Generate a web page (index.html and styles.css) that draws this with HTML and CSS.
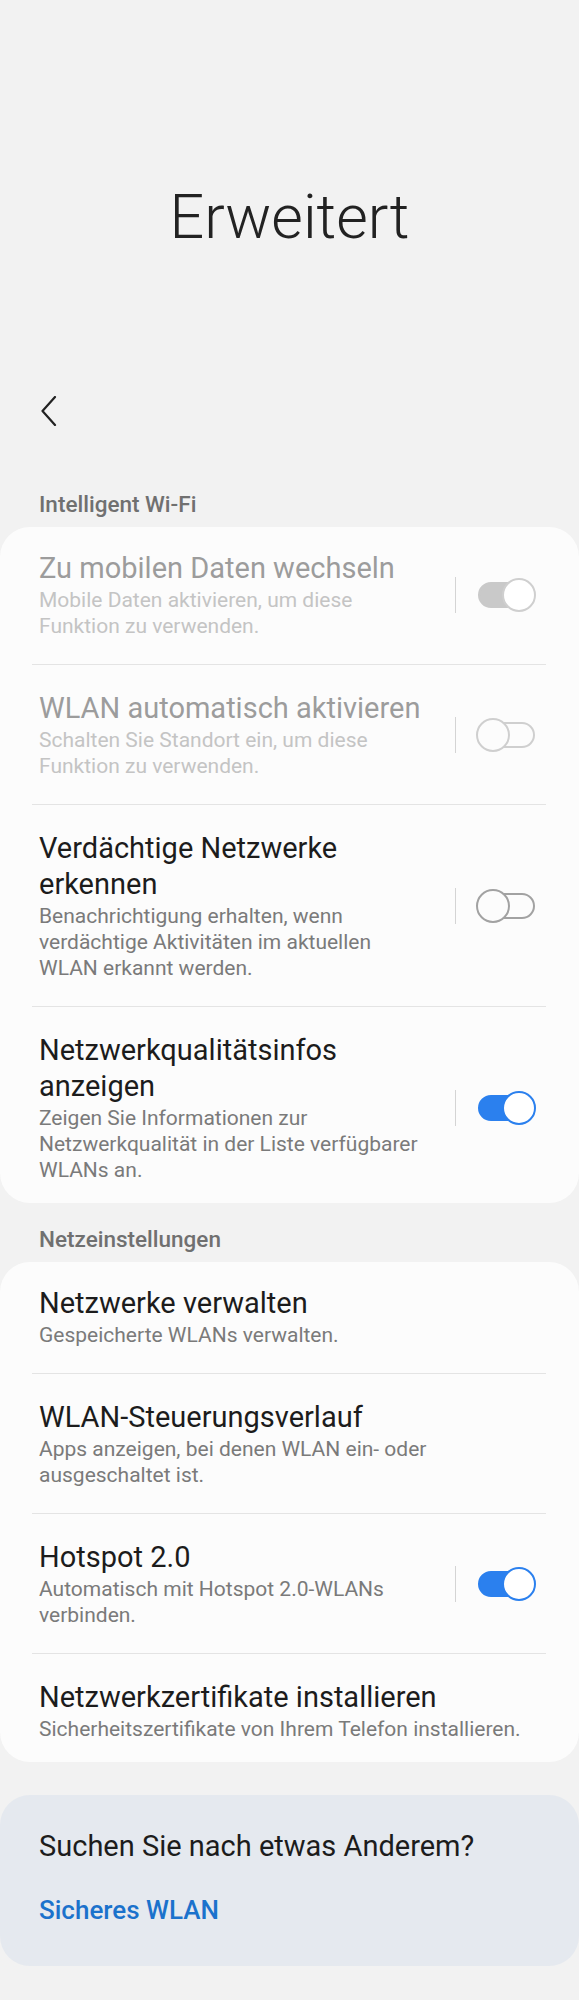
FILE: index.html
```html
<!DOCTYPE HTML>
<html lang="de">
<head>
  <meta charset="UTF-8">
  <meta name="viewport" content="width=device-width, initial-scale=1.0">
  <title>Erweitert</title>
  <link rel="stylesheet" href="styles.css">
</head>
<body>
  <div class="page">
    <!-- Big collapsing title -->
    <h1 class="page-title">Erweitert</h1>
    <div class="nav">
      <svg class="back" width="18" height="30" viewBox="0 0 18 30">
        <polyline points="15,1 2.5,15 15,29" fill="none" stroke="#222" stroke-width="2.2" stroke-linecap="round" stroke-linejoin="round"/>
      </svg>
    </div>

    <!-- Intelligent Wi-Fi -->
    <div class="section-label">Intelligent Wi-Fi</div>
    <div class="card">
      <div class="row disabled">
        <div class="row-text with-ctl">
          <div class="row-title">Zu mobilen Daten wechseln</div>
          <div class="row-sub">Mobile Daten aktivieren, um diese Funktion zu verwenden.</div>
        </div>
        <div class="row-ctl">
          <span class="divider"></span>
          <span class="switch on"><span class="track"></span><span class="knob"></span></span>
        </div>
      </div>
      <div class="row disabled">
        <div class="row-text with-ctl">
          <div class="row-title">WLAN automatisch aktivieren</div>
          <div class="row-sub">Schalten Sie Standort ein, um diese Funktion zu verwenden.</div>
        </div>
        <div class="row-ctl">
          <span class="divider"></span>
          <span class="switch"><span class="track"></span><span class="knob"></span></span>
        </div>
      </div>
      <div class="row">
        <div class="row-text with-ctl">
          <div class="row-title">Verdächtige Netzwerke erkennen</div>
          <div class="row-sub">Benachrichtigung erhalten, wenn verdächtige Aktivitäten im aktuellen WLAN erkannt werden.</div>
        </div>
        <div class="row-ctl">
          <span class="divider"></span>
          <span class="switch"><span class="track"></span><span class="knob"></span></span>
        </div>
      </div>
      <div class="row">
        <div class="row-text with-ctl">
          <div class="row-title">Netzwerkqualitätsinfos anzeigen</div>
          <div class="row-sub">Zeigen Sie Informationen zur Netzwerkqualität in der Liste verfügbarer WLANs an.</div>
        </div>
        <div class="row-ctl">
          <span class="divider"></span>
          <span class="switch on"><span class="track"></span><span class="knob"></span></span>
        </div>
      </div>
    </div>

    <!-- Netzeinstellungen -->
    <div class="section-label">Netzeinstellungen</div>
    <div class="card">
      <div class="row">
        <div class="row-text">
          <div class="row-title">Netzwerke verwalten</div>
          <div class="row-sub">Gespeicherte WLANs verwalten.</div>
        </div>
      </div>
      <div class="row">
        <div class="row-text">
          <div class="row-title">WLAN-Steuerungsverlauf</div>
          <div class="row-sub">Apps anzeigen, bei denen WLAN ein- oder ausgeschaltet ist.</div>
        </div>
      </div>
      <div class="row">
        <div class="row-text with-ctl">
          <div class="row-title">Hotspot 2.0</div>
          <div class="row-sub">Automatisch mit Hotspot 2.0-WLANs verbinden.</div>
        </div>
        <div class="row-ctl">
          <span class="divider"></span>
          <span class="switch on"><span class="track"></span><span class="knob"></span></span>
        </div>
      </div>
      <div class="row">
        <div class="row-text">
          <div class="row-title">Netzwerkzertifikate installieren</div>
          <div class="row-sub">Sicherheitszertifikate von Ihrem Telefon installieren.</div>
        </div>
      </div>
    </div>

    <!-- Suggestions -->
    <div class="card suggest">
      <div class="suggest-title">Suchen Sie nach etwas Anderem?</div>
      <a class="suggest-link" href="#">Sicheres WLAN</a>
    </div>
  </div>
</body>
</html>
```

FILE: styles.css
```css
body {
  margin: 0;
  background-color: #f2f2f2;
  font-family: 'Roboto', 'Liberation Sans', sans-serif;
  color: #1c1c1c;
}
.page {
  width: 579px;
  padding-bottom: 35px;
}
.page-title {
  margin: 0;
  padding-top: 179px;
  font-size: 61px;
  line-height: 77px;
  font-weight: 300;
  text-align: center;
  color: #222;
}
.nav {
  display: flex;
  align-items: center;
  height: 56px;
  margin-top: 127px;
  margin-bottom: 29px;
  padding-left: 40px;
}
.section-label {
  padding: 23px 39px 10px;
  font-size: 22.5px;
  line-height: 26px;
  font-weight: 500;
  color: #707070;
}
.card {
  background-color: #fcfcfc;
  border-radius: 30px;
  overflow: hidden;
}
.row {
  display: flex;
  align-items: center;
  margin: 0 33px 0 32px;
  padding: 25px 10px 25px 7px;
  border-bottom: 1px solid #e4e4e4;
}
.row:first-child {
  padding-top: 23px;
}
.row:last-child {
  padding-bottom: 20px;
  border-bottom: none;
}
.row-text {
  flex: 1;
}
.row-text.with-ctl {
  padding-right: 24px;
}
.row-title {
  font-size: 29px;
  line-height: 36px;
  color: #1c1c1c;
}
.row-sub {
  margin-top: 1px;
  font-size: 21px;
  line-height: 26px;
  color: #7a7a7a;
}
.row.disabled .row-title {
  color: #9c9c9c;
}
.row.disabled .row-sub {
  color: #c4c4c4;
}
.row-ctl {
  display: flex;
  align-items: center;
}
.divider {
  width: 1px;
  height: 36px;
  background-color: #d4d4d4;
  margin-right: 20px;
}

/* One UI style switch */
.switch {
  position: relative;
  display: block;
  width: 60px;
  height: 34px;
}
.switch .track {
  position: absolute;
  left: 2px;
  right: 1px;
  top: 4px;
  height: 26px;
  border: 2px solid #a2a2a2;
  border-radius: 13px;
  box-sizing: border-box;
}
.switch .knob {
  position: absolute;
  top: 0;
  left: 0;
  width: 34px;
  height: 34px;
  border: 2px solid #a2a2a2;
  border-radius: 50%;
  background-color: #fcfcfc;
  box-sizing: border-box;
}
.switch.on .track {
  background-color: #2b80ee;
  border-color: #2b80ee;
}
.switch.on .knob {
  left: auto;
  right: 0;
  background-color: #fff;
  border-color: #2b80ee;
}
.row.disabled .switch .track,
.row.disabled .switch .knob {
  border-color: #cfcfcf;
}
.row.disabled .switch.on .track {
  background-color: #c9c9c9;
  border-color: #c9c9c9;
}

.card.suggest {
  margin-top: 33px;
  padding: 33px 39px 40px;
  background-color: #e5e9ef;
}
.suggest-title {
  font-size: 29px;
  line-height: 36px;
  color: #1c1c1c;
}
.suggest-link {
  display: block;
  margin-top: 30px;
  font-size: 26px;
  line-height: 32px;
  font-weight: 500;
  color: #1b72cc;
  text-decoration: none;
}
```
